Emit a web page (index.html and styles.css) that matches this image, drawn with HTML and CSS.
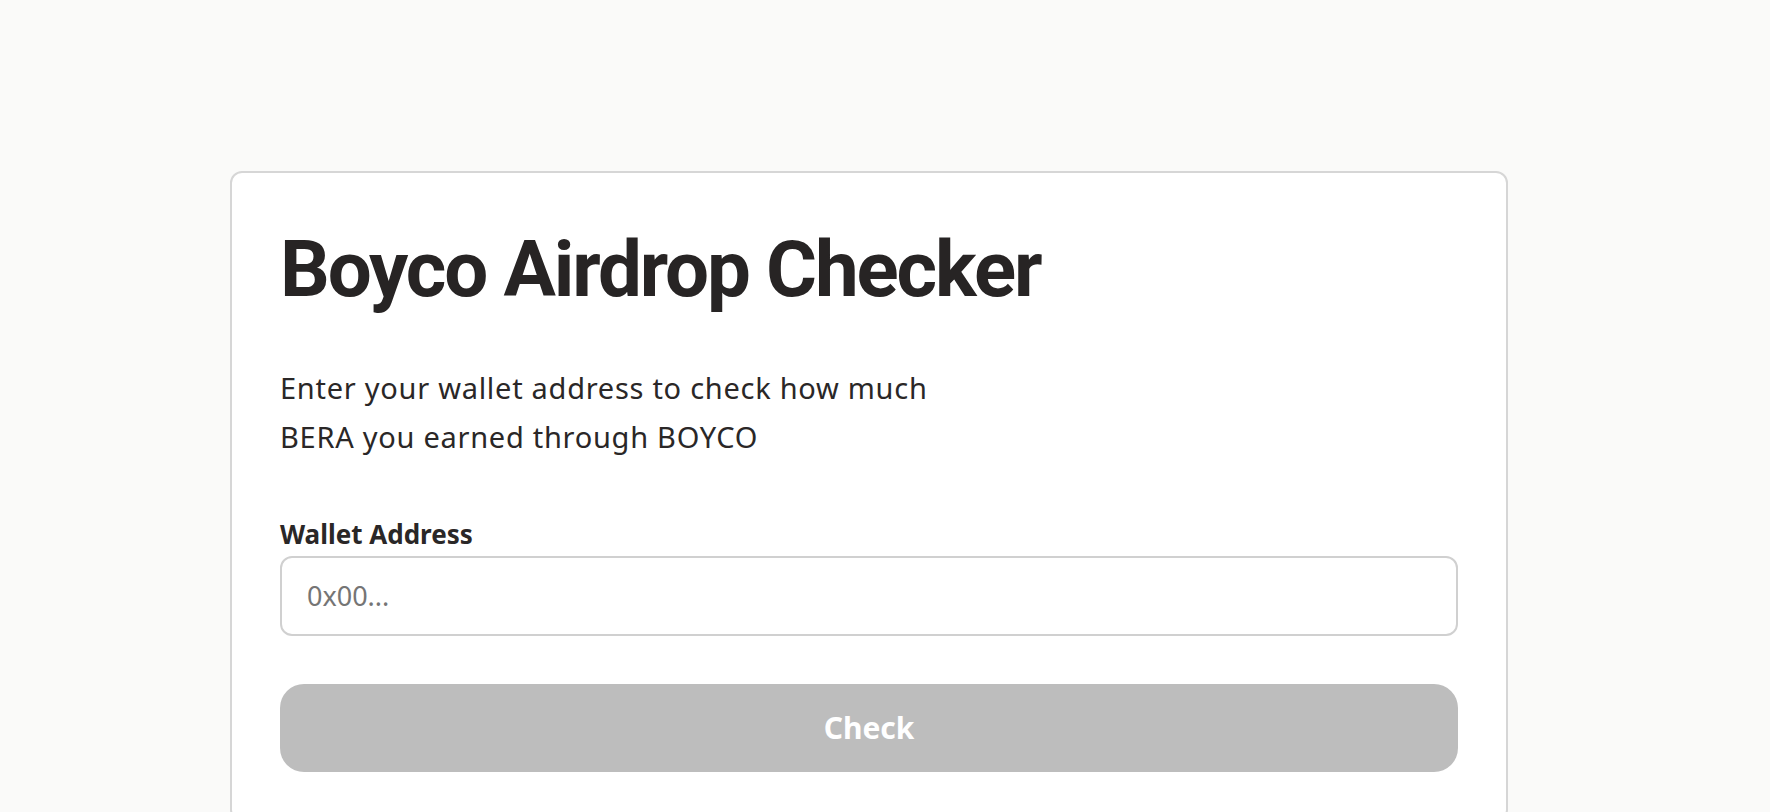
FILE: index.html
```html
<!DOCTYPE html>
<html lang="en">
<head>
<meta charset="utf-8">
<title>Boyco Airdrop Checker</title>
<link rel="stylesheet" href="styles.css">
</head>
<body>
<main class="page">
  <section class="card">
    <h1 class="title">Boyco Airdrop Checker</h1>
    <p class="lead">Enter your wallet address to check how much BERA you earned through BOYCO</p>
    <form class="form">
      <label class="label" for="wallet">Wallet Address</label>
      <input class="input" id="wallet" type="text" placeholder="0x00...">
      <button class="button" type="button" disabled>Check</button>
    </form>
  </section>
</main>
</body>
</html>
```
FILE: styles.css
```css
* { box-sizing: border-box; }
html, body { margin: 0; padding: 0; }
body {
  background: #fafaf9;
  font-family: "Noto Sans", "Liberation Sans", sans-serif;
  color: #2a2727;
  overflow: hidden;
}
.page {
  padding: 171px 0 0 230px;
}
.card {
  width: 1278px;
  background: #ffffff;
  border: 2px solid #d6d6d6;
  border-radius: 12px;
  padding: 54px 48px 48px;
}
.title {
  margin: 0;
  font-family: Roboto, "Liberation Sans", sans-serif;
  font-size: 78px;
  line-height: 1.1;
  font-weight: 700;
  letter-spacing: -0.027em;
  color: #272424;
}
.lead {
  margin: 50px 0 0;
  max-width: 690px;
  font-size: 29px;
  line-height: 49px;
  font-weight: 400;
  letter-spacing: 0.025em;
}
.form {
  display: flex;
  flex-direction: column;
  margin-top: 57px;
}
.label {
  font-size: 26px;
  line-height: 32px;
  font-weight: 700;
  margin-bottom: 6px;
}
.input {
  height: 80px;
  border: 2px solid #d0d0d0;
  border-radius: 12px;
  padding: 0 25px;
  font-family: inherit;
  font-size: 27px;
  color: #2a2727;
  background: #fff;
  outline: none;
}
.input::placeholder { color: #757575; }
.button {
  margin-top: 48px;
  height: 88px;
  border: none;
  border-radius: 24px;
  background: #bdbdbd;
  color: #ffffff;
  font-family: inherit;
  font-size: 30px;
  font-weight: 700;
}
```
